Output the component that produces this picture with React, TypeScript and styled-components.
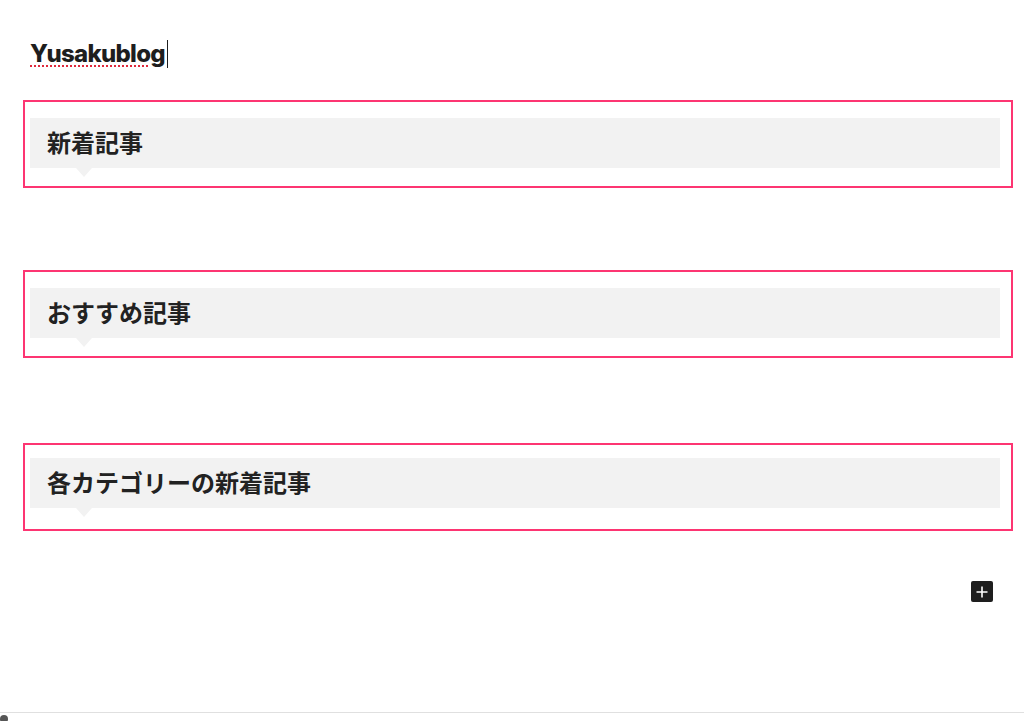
import React from "react";
import styled, { createGlobalStyle } from "styled-components";

const GlobalStyle = createGlobalStyle`
  html, body {
    margin: 0;
    padding: 0;
    background: #fff;
  }
  body {
    font-family: Inter, "Noto Sans CJK JP", sans-serif;
    color: #1e1e1e;
  }
`;

const Page = styled.div`
  position: relative;
  height: 721px;
  overflow: hidden;
  display: flex;
  flex-direction: column;
`;

const Canvas = styled.main`
  flex: 1;
  padding: 38px 11px 0 23px;
`;

const SiteTitle = styled.h1`
  margin: 0 0 30px 7px;
  display: inline-flex;
  align-items: center;
  font-family: Inter, sans-serif;
  font-size: 24px;
  font-weight: 800;
  line-height: 32px;
  letter-spacing: -0.7px;
  color: #1e1e1e;
`;

const Misspelled = styled.span`
  text-decoration: underline dotted #e0283b;
  text-decoration-thickness: 1.5px;
  text-underline-offset: 3px;
`;

const Caret = styled.span`
  display: inline-block;
  width: 1px;
  height: 28px;
  margin-left: 2px;
  background: #1e1e1e;
`;

const Section = styled.section<{ gap: number; padTop: number }>`
  box-sizing: border-box;
  height: 88px;
  border: 2px solid #fd3572;
  padding: ${(p) => p.padTop}px 11px 0 5px;
  margin-bottom: ${(p) => p.gap}px;
`;

const Heading = styled.h2`
  position: relative;
  margin: 0;
  height: 50px;
  padding: 0 0 4px 17px;
  box-sizing: border-box;
  display: flex;
  align-items: center;
  background: #f2f2f2;
  font-family: "Noto Sans CJK JP", sans-serif;
  font-size: 24px;
  font-weight: 700;
  color: #222;

  &::after {
    content: "";
    position: absolute;
    left: 46px;
    top: 50px;
    border-left: 8px solid transparent;
    border-right: 8px solid transparent;
    border-top: 9px solid #f2f2f2;
  }
`;

const AddRow = styled.div`
  display: flex;
  justify-content: flex-end;
  padding: 50px 20px 0 0;
`;

const AddButton = styled.button`
  width: 22px;
  height: 21px;
  padding: 0;
  border: none;
  border-radius: 2px;
  background: #1e1e1e;
  display: flex;
  align-items: center;
  justify-content: center;
  cursor: pointer;
`;

const StatusBar = styled.footer`
  height: 8px;
  border-top: 1px solid #e0e0e0;
  position: relative;
`;

const StatusIcon = styled.span`
  position: absolute;
  left: 0;
  top: 2px;
  width: 8px;
  height: 8px;
  border-radius: 50%;
  background: #555;
`;

const sections = [
  { title: "新着記事", gap: 82, padTop: 16 },
  { title: "おすすめ記事", gap: 85, padTop: 16 },
  { title: "各カテゴリーの新着記事", gap: 0, padTop: 13 },
];

export default function App() {
  return (
    <Page>
      <GlobalStyle />
      <Canvas>
        <SiteTitle>
          <Misspelled>Yusakublog</Misspelled>
          <Caret />
        </SiteTitle>
        {sections.map((s) => (
          <Section key={s.title} gap={s.gap} padTop={s.padTop}>
            <Heading>{s.title}</Heading>
          </Section>
        ))}
        <AddRow>
          <AddButton aria-label="ブロックを追加">
            <svg width="14" height="14" viewBox="0 0 14 14">
              <path d="M7 1.5v11M1.5 7h11" stroke="#fff" strokeWidth="1.6" />
            </svg>
          </AddButton>
        </AddRow>
      </Canvas>
      <StatusBar>
        <StatusIcon />
      </StatusBar>
    </Page>
  );
}
